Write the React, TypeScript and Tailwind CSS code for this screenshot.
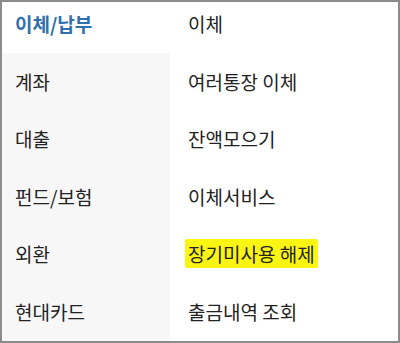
const FONT = "font-['Noto_Sans_CJK_KR','Noto_Sans',sans-serif]"

const rows = [
  { left: "이체/납부", right: "이체" },
  { left: "계좌", right: "여러통장 이체" },
  { left: "대출", right: "잔액모으기" },
  { left: "펀드/보험", right: "이체서비스" },
  { left: "외환", right: "장기미사용 해제", highlight: true },
  { left: "현대카드", right: "출금내역 조회" },
]

export default function App() {
  return (
    <div className={`${FONT} h-[343px] w-[400px] overflow-hidden border-2 border-[#8c8c8c] bg-white text-[19px] leading-none text-[#222]`}>
      <div className="-mt-[7px] flex h-full">
        <div className="flex h-[360px] w-[168px] flex-col bg-[#f7f7f7]">
          {rows.map((row, i) => (
            <div
              key={row.left}
              className={
                i === 0
                  ? "flex h-[57.5px] shrink-0 items-center bg-white pl-[13px] font-bold text-[#2f6fae]"
                  : "flex h-[57.5px] shrink-0 items-center pl-[13px]"
              }
            >
              {row.left}
            </div>
          ))}
        </div>
        <div className="flex flex-1 flex-col">
          {rows.map((row) => (
            <div key={row.right} className="flex h-[57.5px] shrink-0 items-center pl-[18px]">
              {row.highlight ? (
                <span className="-ml-[3px] rounded-[2px] bg-[#fbf514] px-[3px] py-[5px] leading-none">
                  {row.right}
                </span>
              ) : (
                row.right
              )}
            </div>
          ))}
        </div>
      </div>
    </div>
  )
}
